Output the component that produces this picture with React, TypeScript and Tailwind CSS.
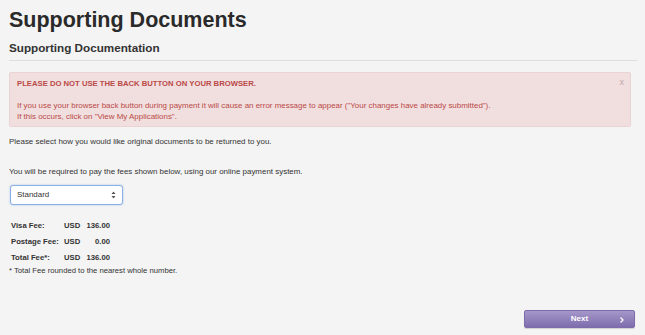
import { ChevronRight } from 'lucide-react'

const fees = [
  { label: 'Visa Fee:', amount: '136.00' },
  { label: 'Postage Fee:', amount: '0.00' },
  { label: 'Total Fee*:', amount: '136.00' },
]

export default function App() {
  return (
    <div
      className="w-[645px] h-[335px] bg-[#f4f4f4] text-[#333] px-[9px] pt-[6px] overflow-hidden"
      style={{ fontFamily: '"Liberation Sans", Arial, sans-serif' }}
    >
      <h1 className="text-[21.5px] leading-[28px] font-bold text-[#2a2a2a]">Supporting Documents</h1>
      <h2 className="mt-[7px] text-[11.7px] leading-[14px] font-bold text-[#333]">Supporting Documentation</h2>
      <div className="mt-[5px] h-px bg-[#dedede] w-[628px]" />

      {/* Alert */}
      <div className="relative mt-[11px] w-[622px] h-[55px] rounded-[2px] border border-[#ebd3d3] bg-[#f1dede] px-[7px] pt-[5px] text-[#b94a48]">
        <p className="text-[7.7px] leading-[11px] font-bold">PLEASE DO NOT USE THE BACK BUTTON ON YOUR BROWSER.</p>
        <p className="mt-[11px] text-[7.95px] leading-[11px]">
          If you use your browser back button during payment it will cause an error message to appear ("Your changes have already submitted").
        </p>
        <p className="text-[7.95px] leading-[11px]">If this occurs, click on "View My Applications".</p>
        <span className="absolute right-[6px] top-[4px] text-[9px] leading-[11px] text-[#bfa9a9]">x</span>
      </div>

      <p className="mt-[9px] text-[7.95px] leading-[11px]">Please select how you would like original documents to be returned to you.</p>
      <p className="mt-[19px] text-[7.95px] leading-[11px]">You will be required to pay the fees shown below, using our online payment system.</p>

      {/* Select */}
      <div className="mt-[8px] ml-px flex items-center justify-between w-[113px] h-[20px] rounded-[3px] border border-[#8ab0e6] bg-white px-[6px] shadow-[0_0_2px_#9cbcee]">
        <span className="text-[7.95px] text-[#333]">Standard</span>
        <svg width="5" height="8" viewBox="0 0 5 8">
          <path d="M2.5 0.5 L4.5 3 H0.5 Z M2.5 7.5 L4.5 5 H0.5 Z" fill="#555" />
        </svg>
      </div>

      {/* Fees */}
      <div className="mt-[15px] ml-[2px] flex flex-col gap-[5px] text-[7.7px] leading-[11px] font-bold text-[#333]">
        {fees.map((f) => (
          <div key={f.label} className="flex">
            <span className="w-[53px]">{f.label}</span>
            <span className="w-[18px]">USD</span>
            <span className="w-[28px] text-right">{f.amount}</span>
          </div>
        ))}
      </div>
      <p className="mt-[3px] text-[7.7px] leading-[10px]">* Total Fee rounded to the nearest whole number.</p>

      <div className="flex justify-end w-[626px] mt-[34px]">
        <button className="relative flex items-center justify-center w-[111px] h-[18px] rounded-[2px] border border-[#7d6ca9] bg-gradient-to-b from-[#a597c9] to-[#7e6dad] text-white text-[8px] font-bold shadow-[0_1px_1px_rgba(0,0,0,0.15)]">
          Next
          <ChevronRight className="absolute right-[8px] top-[4.5px]" size={8} strokeWidth={4} />
        </button>
      </div>
    </div>
  )
}
